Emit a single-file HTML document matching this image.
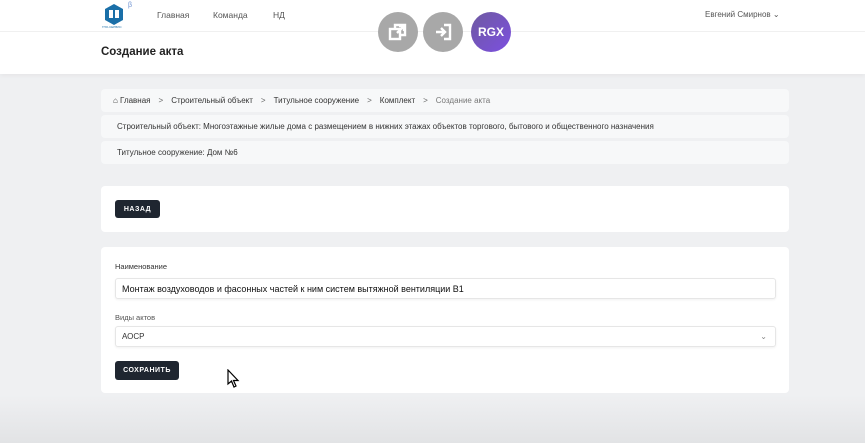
<!DOCTYPE html>
<html><head><meta charset="utf-8"><style>
*{box-sizing:border-box;margin:0;padding:0}
body{width:865px;height:443px;overflow:hidden;font-family:"Liberation Sans","DejaVu Sans",sans-serif;background:linear-gradient(#eff0f2 0,#eff0f2 395px,#e2e3e5 443px);position:relative;color:#222}
.hdr{position:absolute;left:0;top:0;width:865px;height:32px;background:#fff;border-bottom:1px solid #f0f0f0}
.tband{position:absolute;left:0;top:32px;width:865px;height:42px;background:#fff;box-shadow:0 2px 4px rgba(0,0,0,.04)}
.abs{position:absolute}
.nav{font-size:8.5px;color:#555;top:10px}
.card{position:absolute;left:101px;width:688px;background:#fff;border-radius:4px}
.crumb{font-size:8px;color:#333}
.sep{display:inline-block;margin:0 8px;color:#666}
.btn{position:absolute;background:#1f2630;color:#fff;font-size:7px;font-weight:bold;letter-spacing:.5px;border-radius:3px;display:flex;align-items:center;justify-content:center}
.inp{position:absolute;left:115px;width:661px;height:21px;border:1px solid #e6e6e6;border-radius:3px;background:#fff;box-shadow:0 1px 2px rgba(0,0,0,.06);padding-left:6px;display:flex;align-items:center}
.circ{position:absolute;top:12px;width:40px;height:40px;border-radius:50%;background:#a8a8a8;display:flex;align-items:center;justify-content:center}
</style></head><body>
<div class="hdr"></div>
<div class="tband"></div>
<svg class="abs" style="left:102px;top:1px" width="26" height="26" viewBox="0 0 26 26"><path d="M3 8 L12 3 L21 8 L21 19 L12 24 L3 19Z" fill="#1a6fa8"/><rect x="7" y="9" width="4" height="8" fill="#fff"/><rect x="13" y="9" width="4" height="8" fill="#fff"/></svg>
<div class="abs" style="left:128px;top:2px;font-size:7px;color:#6a8fd0">β</div>
<div class="abs" style="left:102px;top:25px;font-size:3px;color:#1a6fa8">ГПО-СЕРВИС</div>
<div class="abs nav" style="left:157px">Главная</div>
<div class="abs nav" style="left:213px">Команда</div>
<div class="abs nav" style="left:273px">НД</div>
<div class="abs" style="left:705px;top:10px;font-size:8px;color:#555">Евгений Смирнов ⌄</div>
<div class="abs" style="left:101px;top:46px;font-size:11.5px;font-weight:bold;color:#222">Создание акта</div>
<div class="circ" style="left:378px"><svg width="20" height="20" viewBox="0 0 20 20" fill="none" stroke="#fff" stroke-width="2.4"><rect x="2" y="7" width="10" height="10"/><path d="M7 7V3h10v10h-5M9 11l7-7M11 4h5v5"/></svg></div>
<div class="circ" style="left:423px"><svg width="20" height="20" viewBox="0 0 20 20" fill="none" stroke="#fff" stroke-width="2.4"><path d="M11 3h6v14h-6M3 10h9M8 6l4 4-4 4"/></svg></div>
<div class="circ" style="left:471px;background:linear-gradient(135deg,#6e5aa0,#7c4fe0);color:#fff;font-weight:bold;font-size:12px">RGX</div>
<div class="card" style="top:89px;height:23px;background:#f7f8f9;display:flex;align-items:center;padding-left:12px" ><span class="crumb">⌂ Главная<span class="sep">&gt;</span>Строительный объект<span class="sep">&gt;</span>Титульное сооружение<span class="sep">&gt;</span>Комплект<span class="sep">&gt;</span><span style="color:#777">Создание акта</span></span></div>
<div class="card" style="top:115px;height:23px;background:#f7f8f9;display:flex;align-items:center;padding-left:16px"><span class="crumb">Строительный объект: Многоэтажные жилые дома с размещением в нижних этажах объектов торгового, бытового и общественного назначения</span></div>
<div class="card" style="top:141px;height:23px;background:#f7f8f9;display:flex;align-items:center;padding-left:16px"><span class="crumb">Титульное сооружение: Дом №6</span></div>
<div class="card" style="top:186px;height:46px"></div>
<div class="btn" style="left:115px;top:200px;width:45px;height:18px">НАЗАД</div>
<div class="card" style="top:247px;height:146px"></div>
<div class="abs" style="left:115px;top:262px;font-size:7.5px;color:#333">Наименование</div>
<div class="inp" style="top:278px;font-size:9px;color:#111">Монтаж воздуховодов и фасонных частей к ним систем вытяжной вентиляции В1</div>
<div class="abs" style="left:115px;top:313px;font-size:7.5px;color:#555">Виды актов</div>
<div class="inp" style="top:326px;font-size:8px;color:#333">АОСР<span style="position:absolute;right:8px;color:#888;font-size:8px">⌄</span></div>
<div class="btn" style="left:115px;top:361px;width:64px;height:19px">СОХРАНИТЬ</div>
<svg class="abs" style="left:227px;top:369px" width="14" height="20" viewBox="0 0 14 20"><path d="M1 1 L1 15 L4.5 12 L7 18 L9 17 L6.5 11.5 L11 11.5Z" fill="#fff" stroke="#000" stroke-width="1.2"/></svg>
</body></html>
